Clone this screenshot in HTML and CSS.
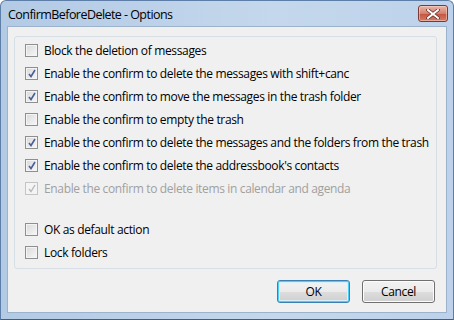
FILE: index.html
```html
<!DOCTYPE html>
<html lang="en">
<head>
    <meta charset="UTF-8">
    <title>ConfirmBeforeDelete - Options</title>
    <link rel="stylesheet" href="styles.css">
</head>
<body>
    <div class="window">
        <div class="titlebar">
            <span class="title">ConfirmBeforeDelete - Options</span>
            <div class="close">
                <svg width="14" height="10" viewBox="0 0 14 10">
                    <path d="M2 1 L12 9 M12 1 L2 9" stroke="#5a2620" stroke-width="3.4" stroke-linecap="square"/>
                    <path d="M2 1 L12 9 M12 1 L2 9" stroke="#fff" stroke-width="2" stroke-linecap="square"/>
                </svg>
            </div>
        </div>

        <div class="client">
            <div class="group">
                <label class="option"><span class="box"></span>Block the deletion of messages</label>
                <label class="option"><span class="box checked"></span>Enable the confirm to delete the messages with shift+canc</label>
                <label class="option"><span class="box checked"></span>Enable the confirm to move the messages in the trash folder</label>
                <label class="option"><span class="box"></span>Enable the confirm to empty the trash</label>
                <label class="option"><span class="box checked"></span>Enable the confirm to delete the messages and the folders from the trash</label>
                <label class="option"><span class="box checked"></span>Enable the confirm to delete the addressbook's contacts</label>
                <label class="option disabled"><span class="box checked"></span>Enable the confirm to delete items in calendar and agenda</label>

                <div class="spacer"></div>

                <label class="option"><span class="box"></span>OK as default action</label>
                <label class="option"><span class="box"></span>Lock folders</label>
            </div>

            <div class="buttons">
                <button class="default">OK</button>
                <button>Cancel</button>
            </div>
        </div>
    </div>
</body>
</html>
```

FILE: styles.css
```css
body {
    margin: 0;
    background: #fff;
    font-family: "Open Sans", "Noto Sans", sans-serif;
    font-size: 12px;
    letter-spacing: -0.35px;
    color: #000;
}

/* Window frame */
.window {
    width: 454px;
    height: 320px;
    box-sizing: border-box;
    border: 1px solid #5d7ea6;
    border-bottom-color: #3f5f85;
    border-radius: 6px 6px 0 0;
    background: linear-gradient(90deg, #b3cae5, #c4d7ec 60%, #bdd2ea);
    display: flex;
    flex-direction: column;
}

.titlebar {
    height: 25px;
    display: flex;
    align-items: flex-start;
    justify-content: space-between;
    padding: 0 5px 0 7px;
}

.title {
    margin-top: 5px;
    font-size: 12.5px;
    letter-spacing: -0.55px;
    color: #000;
}

/* Close button */
.close {
    width: 30px;
    height: 17px;
    margin-top: 4px;
    box-sizing: border-box;
    border: 1px solid #7a3a33;
    border-radius: 3px;
    background: linear-gradient(#e9b5a8, #d5806e 50%, #c4533f 51%, #d27e66);
    box-shadow: inset 0 0 0 1px rgba(255, 220, 210, 0.5);
    display: flex;
    align-items: center;
    justify-content: center;
}

/* Client area */
.client {
    flex: 1;
    margin: 0 6px 6px 6px;
    border: 1px solid #9db2cb;
    background: #f0f0f0;
    display: flex;
    flex-direction: column;
}

/* Group box */
.group {
    margin: 9px 9px 0 6px;
    height: 233px;
    box-sizing: border-box;
    border: 1px solid #d5dfe5;
    border-radius: 3px;
    padding: 2px 10px 0 10px;
    display: flex;
    flex-direction: column;
}

.option {
    height: 23px;
    display: flex;
    align-items: center;
    gap: 6px;
    white-space: nowrap;
}

.option.disabled {
    color: #a0a0a0;
}

.spacer {
    height: 18px;
}

/* Checkbox */
.box {
    width: 13px;
    height: 13px;
    box-sizing: border-box;
    flex-shrink: 0;
    border: 1px solid #8e8f8f;
    background: linear-gradient(135deg, #d9d9d9, #f7f7f7);
    box-shadow: inset 0 0 0 1px #f4f4f4;
    position: relative;
}

.box.checked::after {
    content: "";
    position: absolute;
    left: 2px;
    top: 1px;
    width: 8px;
    height: 9px;
    background: url("data:image/svg+xml;utf8,<svg xmlns='http://www.w3.org/2000/svg' width='8' height='9'><path d='M1 5 L3 7.5 L7 1' fill='none' stroke='%234a5f97' stroke-width='1.6'/></svg>") no-repeat;
}

.disabled .box {
    border-color: #c4c4c4;
    background: #f4f4f4;
}

.disabled .box.checked::after {
    background: url("data:image/svg+xml;utf8,<svg xmlns='http://www.w3.org/2000/svg' width='8' height='9'><path d='M1 5 L3 7.5 L7 1' fill='none' stroke='%23b8b8b8' stroke-width='1.4'/></svg>") no-repeat;
}

/* Dialog buttons */
.buttons {
    display: flex;
    justify-content: flex-end;
    gap: 12px;
    margin: 11px 11px 0 0;
}

button {
    width: 73px;
    height: 23px;
    border: 1px solid #707070;
    border-radius: 3px;
    background: linear-gradient(#f2f2f2, #ebebeb 50%, #dddddd 51%, #cfcfcf);
    box-shadow: inset 0 0 0 1px #fcfcfc;
    font-family: inherit;
    font-size: 12px;
    letter-spacing: inherit;
    color: #000;
    padding: 0;
}

button.default {
    border-color: #3c7fb1;
    box-shadow: inset 0 0 0 1px #48d0fb, inset 0 0 0 2px #d6f1fc;
}
```
